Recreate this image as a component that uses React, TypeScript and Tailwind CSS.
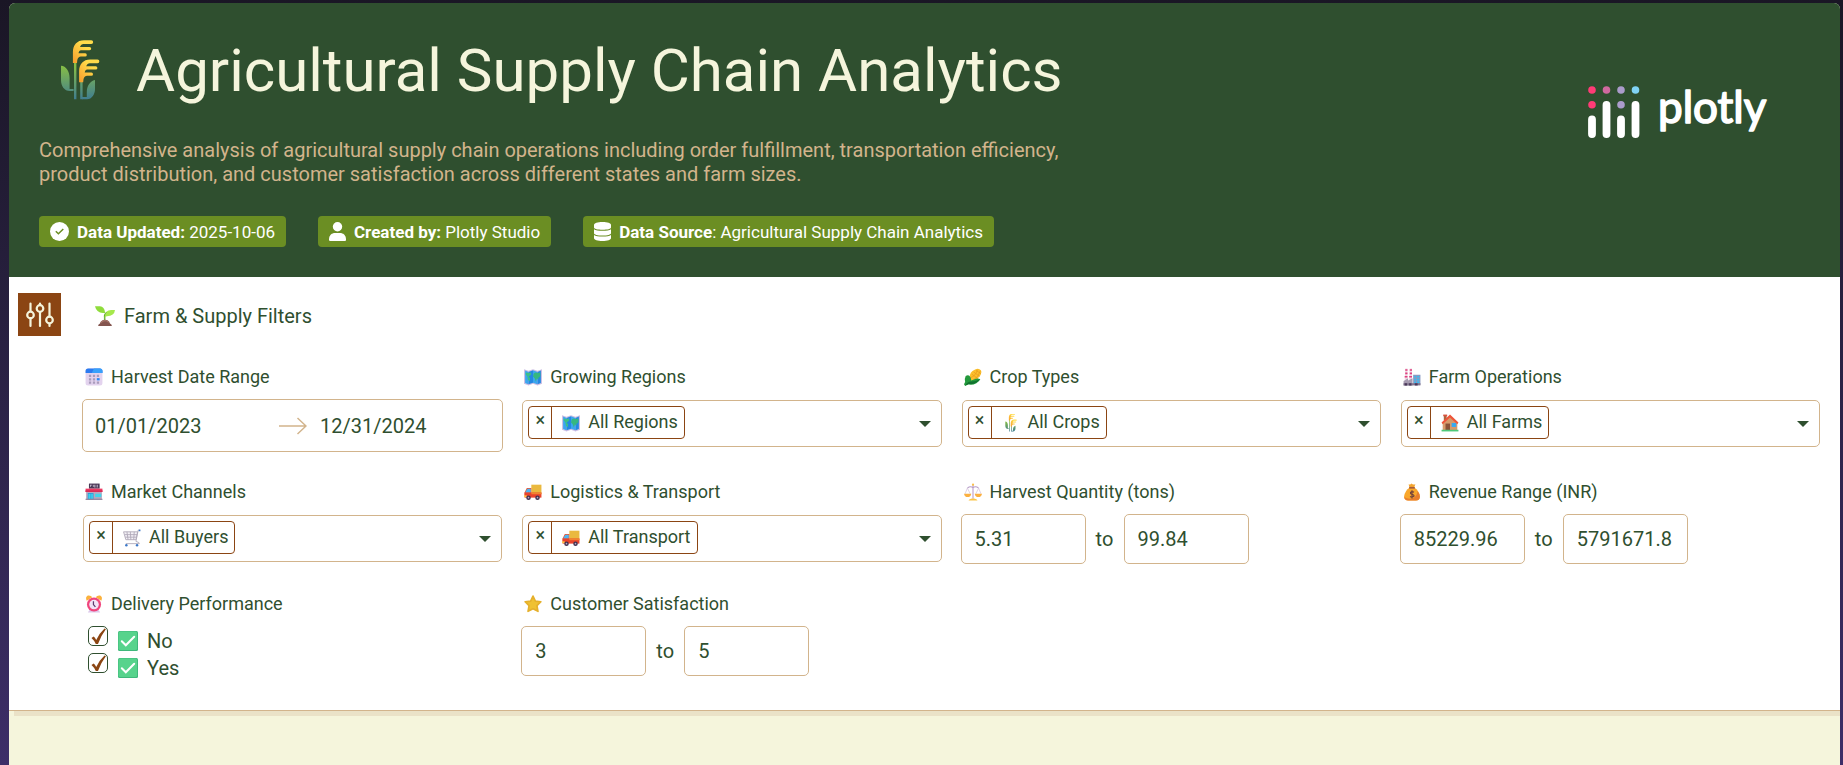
import type { ReactNode } from "react"

type IconProps = {
  className?: string
}

function Wheat({ className }: IconProps) {
  return (
    <svg viewBox="0 0 60 60" className={className} aria-hidden="true">
      <defs>
        <linearGradient id="leaf" x1="0" y1="25" x2="0" y2="60" gradientUnits="userSpaceOnUse">
          <stop offset="0" stopColor="#86bd45" />
          <stop offset="1" stopColor="#3c7a94" />
        </linearGradient>
        <linearGradient id="grain" x1="1" y1="0" x2="0" y2="1">
          <stop offset="0.35" stopColor="#ffdc4a" />
          <stop offset="1" stopColor="#f79a2c" />
        </linearGradient>
      </defs>
      <path d="M24 19h2.4v39.3H24zM30.2 39h2.4v19.3h-2.4z" fill="url(#leaf)" />
      <path d="M11 24.7C16 25 19.6 30 19.6 37v11h4v2H20C14 50 11 45 11 39z" fill="url(#leaf)" />
      <path d="M45 39C40 40 36.8 45 36.8 51v5H32v2.3h5C42 58.3 45 53 45 48z" fill="url(#leaf)" />
      <path
        id="ear"
        d="M22.9 22V11C22.9 4 27 -.8 34 -.8h7.3a1.85 1.85 0 0 1 0 3.7H33.5q-2.5 0-3.5 3H39.5a1.7 1.7 0 0 1 0 3.4H31q-2 0-2.5 3H35.2a1.6 1.6 0 0 1 0 3.2H31q-3 0-3.7 3.5L27 22z"
        fill="url(#grain)"
      />
      <use href="#ear" x="6.2" y="19.3" />
    </svg>
  )
}

function Seedling({ className }: IconProps) {
  return (
    <svg viewBox="0 0 32 32" className={className} aria-hidden="true">
      <path d="M15.5 14v10" stroke="#6fb83c" strokeWidth="2.5" />
      <path d="M0 .5h8q7 1 8 9.500v1Q3 13 0 .5z" fill="#8fdc3c" />
      <path d="M32 6.500q-1 9.500-13 10l-4 1q1-11 11-11z" fill="#a6e84c" />
      <path d="M15 17q0-5 3-7" stroke="#5fa52f" strokeWidth="1.5" fill="none" />
      <path d="M5 32q0-3 3-4 2-6 8-6t8 6q3 1 3 4z" fill="#84554f" />
      <path d="M9 27q3-3.500 7-3.500t6 2.500" stroke="#a8776c" strokeWidth="2" fill="none" />
    </svg>
  )
}

function CalendarIcon({ className }: IconProps) {
  return (
    <svg viewBox="0 0 32 32" className={className} aria-hidden="true">
      <rect x="1" y="1" width="30" height="30" rx="4.5" fill="#e3d3ee" />
      <path d="M1 9V5.500A4.500 4.500 0 0 1 5.500 1h21A4.500 4.500 0 0 1 31 5.500V9z" fill="#2b7bf0" />
      <path d="M16 1h10.500A4.500 4.500 0 0 1 31 5.500V9H12z" fill="#38a0fb" />
      <path
        d="M7 12h4v4H7zM14 12h4v4h-4zM21 12h4v4h-4zM7 18h4v4H7zM14 18h4v4h-4zM7 24h4v4H7zM14 24h4v4h-4zM21 24h4v4h-4z"
        fill="#a99cbc"
      />
      <path d="M21 18h5v4h-5z" fill="#2b86f5" />
    </svg>
  )
}

function MapIcon({ className }: IconProps) {
  return (
    <svg viewBox="0 0 32 32" className={className} aria-hidden="true">
      <path d="M0 2l8 3 8-3 8 3 8-3v26l-8 3-8-3-8 3-8-3z" fill="#cdbfe3" />
      <path d="M2 4.500l6 2.500v22l-6-2.500z" fill="#3ba6ef" />
      <path d="M8 7l8-3v22l-8 3z" fill="#2488e2" />
      <path d="M16 4l8 3v22l-8-3z" fill="#3ba6ef" />
      <path d="M24 7l6-2.500v22L24 29z" fill="#2488e2" />
      <path d="M3 8l4 1 5-1 1 3-3 3-2 1 3 3-1 6-3-3-1-6-3-4z" fill="#3cbf8a" />
      <path d="M17 10l3-2 5 1 4-1v7l-3 2-1 4-2-3-2 6-2-6-3-3z" fill="#35b780" />
    </svg>
  )
}

function Corn({ className }: IconProps) {
  return (
    <svg viewBox="0 0 32 32" className={className} aria-hidden="true">
      <path d="M10 20Q9 7 19 3q7-4 11 1 3 6-4 13-6 6-11 7z" fill="#fbc02d" />
      <path
        d="M14 11l11 8M17 7l11 8M21 4l9 6M12 17q9-3 12-14M17 21q9-5 12-16"
        stroke="#e79a1d"
        strokeWidth="1.2"
        fill="none"
      />
      <path d="M3 14q8-4 10 8l8-3q5-1 8 1-2 4-7 7-8 4-14 2l-6 3-2-3 2-4q-2-5 1-11z" fill="#23993c" />
      <path d="M2 31q5-8 12-7 7 0 14-4-5 9-20 9z" fill="#11722f" />
    </svg>
  )
}

function Factory({ className }: IconProps) {
  return (
    <svg viewBox="0 0 32 32" className={className} aria-hidden="true">
      <path d="M4 1h4v20H3zM12 1h4v20h-5z" fill="#efd7e4" />
      <path d="M4 2h4v3H4zM4 8h4v3H4zM3 14h5v3H3zM12 2h4v3h-4zM12 8h4v3h-4zM11 14h5v3h-5z" fill="#e0407f" />
      <path d="M18 12h13v18H18z" fill="#8b9ac0" />
      <path d="M20 14h3v3h-3zM25 14h4v3h-4zM20 19h3v3h-3zM25 19h4v3h-4zM20 24h3v3h-3zM25 24h4v3h-4z" fill="#35bdf3" />
      <path d="M1 23l8-5v4l8-4v13H1z" fill="#a69bb0" />
      <path d="M1 27h30v4H1z" fill="#83778f" />
      <path d="M3 27h4v4H3zM11 27h4v4h-4zM21 27h5v4h-5z" fill="#493659" />
    </svg>
  )
}

function House({ className }: IconProps) {
  return (
    <svg viewBox="0 0 32 32" className={className} aria-hidden="true">
      <path d="M5 2h5v9H5z" fill="#a9643f" />
      <path d="M4 1h7v3H4z" fill="#d9523c" />
      <path d="M16 4L3 17v12h26V17z" fill="#d69b6c" />
      <path d="M16 1L1 15l2 3L16 6l13 12 2-3z" fill="#ee5439" />
      <path d="M8 17h8v12H8z" fill="#8a5238" />
      <path d="M19 16h8v7h-8z" fill="#37aaf2" />
      <path d="M1 28h30v3H1z" fill="#4fc878" />
    </svg>
  )
}

function Store({ className }: IconProps) {
  return (
    <svg viewBox="0 0 32 32" className={className} aria-hidden="true">
      <path d="M7 1h19v9H7z" fill="#4b3857" />
      <path d="M9 3h3v1.500h-2V7H9zM14 3h1v2h1V3h1v5h-1V6h-2zM19 3h1v5h-1zM22 3h1v5h-1z" fill="#e7ddeb" />
      <path d="M2 15h28v14H2z" fill="#b5a8bf" />
      <path d="M1 10h30v6H1z" fill="#ed3a63" />
      <path d="M1 13h30v3H1z" fill="#d92b56" />
      <path d="M5 18h10v11H5z" fill="#1690d8" />
      <path d="M6 19h4v10H6zM11 19h3v10h-3z" fill="#3fd0ee" />
      <path d="M18 19h11v6H18z" fill="#43d3ea" />
      <path d="M1 28h30v2H1z" fill="#8b7d98" />
    </svg>
  )
}

function Truck({ className }: IconProps) {
  return (
    <svg viewBox="0 0 32 32" className={className} aria-hidden="true">
      <path d="M13 3h18v16H13z" fill="#eab93f" />
      <path d="M5 9h8v13H1v-5z" fill="#f0542f" />
      <path d="M6 10h6v7H2z" fill="#4db5f3" />
      <path d="M1 17h30v9H1z" fill="#e9432c" />
      <path d="M13 17h18v3H13z" fill="#f3822f" />
      <path d="M0 22h5v3H0z" fill="#ffc54b" />
      <circle cx="8" cy="26" r="4" fill="#40304f" />
      <circle cx="24" cy="26" r="4" fill="#40304f" />
      <circle cx="8" cy="26" r="1.5" fill="#b9abc8" />
      <circle cx="24" cy="26" r="1.5" fill="#b9abc8" />
    </svg>
  )
}

function Cart({ className }: IconProps) {
  return (
    <svg viewBox="0 0 32 32" className={className} aria-hidden="true">
      <g fill="none" stroke="#b0a9b9" strokeWidth="1.6" strokeLinejoin="round">
        <path d="M1 5h25l-3 14H5z" fill="#f3f0f6" />
        <path d="M3 10h22M4 14.500h20M7 5l2 14M13 5l1 14M20 5l-1 14" />
        <path d="M30 2h-3l-4 20q7 2 6 4H5" />
      </g>
      <path d="M28 1h3v3h-3z" fill="#3c78c8" />
      <circle cx="6" cy="29" r="2.2" fill="#3c78c8" />
      <circle cx="25" cy="29" r="2.2" fill="#3c78c8" />
    </svg>
  )
}

function Scales({ className }: IconProps) {
  return (
    <svg viewBox="0 0 32 32" className={className} aria-hidden="true">
      <path d="M16 3v25" stroke="#c4a9d0" strokeWidth="2.2" />
      <path d="M6 9q5-4 10-1 5-3 10 1" stroke="#b59bc6" strokeWidth="1.8" fill="none" />
      <path d="M6 9L2 19M6 9l5 10M26 9l-5 10M26 9l4 10" stroke="#cfbcd8" strokeWidth="1.2" />
      <circle cx="16" cy="3" r="2" fill="#fbc14a" />
      <path d="M0 19h13q-1 6-6.500 6T0 19zM19 19h13q-1 6-6.500 6T19 19z" fill="#fbb040" />
      <path d="M8 31q1-3 6-3.500h4q5 .5 6 3.500z" fill="#fcc548" />
    </svg>
  )
}

function MoneyBag({ className }: IconProps) {
  return (
    <svg viewBox="0 0 32 32" className={className} aria-hidden="true">
      <path d="M10 2q3 2 5-1 3 3 7 1l-3 8h-7z" fill="#f3a530" />
      <path d="M12 8h8q9 6 10 16 0 7-7 7H9q-7 0-7-7Q3 14 12 8z" fill="#f9a72c" />
      <path d="M26 14q4 5 4 10 0 7-7 7H9q-6 0-7-6 9 5 17 1 6-4 7-12z" fill="#e97f2e" />
      <path d="M11 7h10v3H11z" fill="#a35a3d" />
      <path
        d="M19.5 16.5q-3.500-2.500-6 0-1 3 2.500 3.500 4 1 3.500 3.500-3 3-7 .5M16 13v14.500"
        stroke="#70413a"
        strokeWidth="2"
        fill="none"
      />
    </svg>
  )
}

function AlarmClock({ className }: IconProps) {
  return (
    <svg viewBox="0 0 32 32" className={className} aria-hidden="true">
      <path d="M5 31l4-6h14l4 6z" fill="#dcc9ea" />
      <path d="M3 10Q0 4 5 1q5-1 8 3zM29 10q3-6-2-9-5-1-8 3z" fill="#fbb13c" />
      <circle cx="16" cy="17" r="12.5" fill="#f0457c" />
      <circle cx="16" cy="17" r="8.5" fill="#f2e4f6" />
      <path d="M15 11v6l3.500 4" stroke="#5c3b6c" strokeWidth="2.2" fill="none" />
    </svg>
  )
}

function Star({ className }: IconProps) {
  return (
    <svg viewBox="0 0 32 32" className={className} aria-hidden="true">
      <path
        d="M16 2l4.200 8.800 9.800 1.200-7 7 1.800 10L16 24.500 7.200 29 9 19l-7-7 9.800-1.200z"
        fill="#efc132"
        stroke="#e5b02c"
        strokeWidth="3"
        strokeLinejoin="round"
      />
    </svg>
  )
}

function GreenCheck({ className }: IconProps) {
  return (
    <svg viewBox="0 0 20 20" className={className} aria-hidden="true">
      <rect width="20" height="20" rx="1.5" fill="#3fb87b" />
      <rect x="0.5" y="0.5" width="18.5" height="18.5" rx="1.5" fill="#57d38c" />
      <path d="M3.800 10.300l4 4 8.400-8.600" stroke="#fff" strokeWidth="2" fill="none" strokeLinecap="round" />
    </svg>
  )
}

function CircleCheck() {
  return (
    <svg viewBox="0 0 19 19" className="size-[19px]" aria-hidden="true">
      <circle cx="9.5" cy="9.5" r="9.5" fill="#fff" />
      <path d="M5.800 9.200l2.600 2.500 4.900-4.700" stroke="#6b8e23" strokeWidth="1.5" fill="none" />
    </svg>
  )
}

function Person() {
  return (
    <svg viewBox="0 0 17 19" className="h-[19px] w-[17px]" fill="#fff" aria-hidden="true">
      <circle cx="8.5" cy="4.7" r="4.7" />
      <path d="M0 17.500C0 13 3 11 6 11h5c3 0 6 2 6 6.500 0 1-.5 1.500-1.500 1.500h-14C.5 19 0 18.500 0 17.500z" />
    </svg>
  )
}

function Database() {
  return (
    <svg viewBox="0 0 17 19" className="h-[19px] w-[17px]" fill="#fff" aria-hidden="true">
      <path d="M0 3C0 1.200 3.500 0 8.500 0S17 1.200 17 3v2.500c0 1.300-3.500 2.300-8.500 2.300S0 6.800 0 5.500z" />
      <path d="M0 7.200c1.500 1 4.500 1.600 8.500 1.600S15.500 8.200 17 7.200v4c0 1.300-3.500 2.400-8.500 2.400S0 12.500 0 11.200z" />
      <path d="M0 13c1.500 1 4.500 1.600 8.500 1.600S15.500 14 17 13v3c0 1.800-3.500 3-8.500 3S0 17.800 0 16z" />
    </svg>
  )
}

function Sliders() {
  return (
    <svg
      viewBox="0 0 28 26"
      className="h-[26px] w-7"
      fill="none"
      stroke="#f5f5dc"
      strokeWidth="2.2"
      strokeLinecap="round"
      aria-hidden="true"
    >
      <path d="M4.500 1.500v7.500M4.500 16v8M14 1.500v1M14 10.500v13.500M23.500 1.500v13M23.500 22v2" />
      <circle cx="4.5" cy="13" r="3.3" />
      <circle cx="14" cy="6.5" r="3.3" />
      <circle cx="23.5" cy="18" r="3.3" />
    </svg>
  )
}

function PlotlyLogo() {
  return (
    <svg viewBox="0 -12 184 72" className="h-[72px] w-[184px]" role="img" aria-label="plotly">
      <circle cx="4" cy="4" r="3.8" fill="#ff3b76" />
      <circle cx="18.5" cy="4" r="3.8" fill="#d0699f" />
      <circle cx="33" cy="4" r="3.8" fill="#ab9ccb" />
      <circle cx="47.5" cy="4" r="3.8" fill="#80d3f5" />
      <circle cx="4" cy="18.7" r="3.8" fill="#ff3b76" />
      <circle cx="33" cy="18.7" r="3.8" fill="#ab9ccb" />
      <path
        d="M4 33.500V48M18.500 19V48M33 33.500V48M47.500 19V48"
        stroke="#fff"
        strokeWidth="7.8"
        strokeLinecap="round"
      />
      <text
        x="70"
        y="37"
        fill="#fff"
        stroke="#fff"
        strokeWidth="1.6"
        strokeLinejoin="round"
        className="font-['Lato',sans-serif] text-[44px]"
      >
        plotly
      </text>
    </svg>
  )
}

type BadgeProps = {
  icon: ReactNode
  children: ReactNode
}

function Badge({ icon, children }: BadgeProps) {
  return (
    <span className="flex h-[31px] items-center gap-2 rounded bg-[#6b8e23] px-[11px] text-[17px] leading-6 text-white">
      {icon}
      <span>{children}</span>
    </span>
  )
}

type FieldProps = {
  id: string
  icon: ReactNode
  title: string
  children: ReactNode
}

function Field({ id, icon, title, children }: FieldProps) {
  return (
    <div className="flex flex-col gap-2.5">
      <label htmlFor={id} className="flex items-center gap-2 pl-[3px] text-lg leading-6">
        {icon}
        {title}
      </label>
      {children}
    </div>
  )
}

type TagSelectProps = {
  id: string
  icon: ReactNode
  value: string
}

function TagSelect({ id, icon, value }: TagSelectProps) {
  return (
    <div className="relative m-px flex h-[47px] items-start rounded-[5px] border border-[#d2b48c] p-[5px]">
      <div className="flex h-[33px] rounded-sm border border-[#8b4513] text-lg leading-[29px]">
        <button
          type="button"
          aria-label={"Remove " + value}
          className="flex w-[23px] justify-center border-r border-[#8b4513] leading-[26px]"
        >
          ×
        </button>
        <span className="flex gap-2 pr-1.5 pl-2.5">
          <span className="flex items-center">{icon}</span>
          {value}
        </span>
      </div>
      <select id={id} className="h-full min-w-0 flex-1 appearance-none outline-none">
        <option value=""></option>
      </select>
      <svg viewBox="0 0 12 6" className="pointer-events-none absolute top-5 right-2.5 h-1.5 w-3" aria-hidden="true">
        <path d="M0 0h12L6 6z" fill="#2f4f2f" />
      </svg>
    </div>
  )
}

type RangeProps = {
  id: string
  title: string
  min: string
  max: string
}

function Range({ id, title, min, max }: RangeProps) {
  const box = "h-[50px] w-[125px] rounded-[5px] border border-[#d2b48c] px-[13px] text-xl outline-none"
  return (
    <div className="flex items-center text-xl">
      <input id={id} className={box} inputMode="decimal" defaultValue={min} />
      <span className="w-[38px] text-center">to</span>
      <input aria-label={title + " maximum"} className={box} inputMode="decimal" defaultValue={max} />
    </div>
  )
}

function CheckRow({ text }: { text: string }) {
  return (
    <label className="flex h-[27px] text-xl leading-[30px]">
      <span className="relative size-5">
        <input
          type="checkbox"
          defaultChecked
          className="peer block size-5 appearance-none rounded-[5px] border border-[#2f4f2f]"
        />
        <svg
          viewBox="0 0 20 20"
          className="pointer-events-none absolute inset-0 hidden size-5 peer-checked:block"
          aria-hidden="true"
        >
          <path d="M3.500 12l2.200-1.500q1.500 1 2.500 3.500Q11.500 7 16.500 2.500l1.500.5Q13 9.500 10 18H7.800Q6.300 14.500 3.500 12z" fill="#8b4513" />
        </svg>
      </span>
      <GreenCheck className="mt-[5px] mr-[9px] ml-2.5 size-5" />
      {text}
    </label>
  )
}

const small = "size-[18px] shrink-0"

function App() {
  return (
    <div className="min-h-screen bg-linear-to-b from-[#1a1625] to-[#3d2e68] pt-[3px] pr-[3px] pl-[9px] font-['Roboto',sans-serif] text-[#2f4f2f]">
      <div className="flex min-h-[calc(100vh-3px)] flex-col overflow-hidden rounded-t-md bg-[#f5f5dc]">
        <header className="flex items-start justify-between bg-[#2f4f2f] pt-8 pr-[68px] pb-[30px] pl-[30px]">
          <div>
            <h1 className="flex items-center gap-[26px] pl-[11px] text-6xl leading-[72px] text-[#f5f5dc]">
              <Wheat className="size-[60px] overflow-visible" />
              Agricultural Supply Chain Analytics
            </h1>
            <p className="mt-[31px] max-w-5xl text-xl leading-6 text-[#d2b48c]">
              Comprehensive analysis of agricultural supply chain operations including order fulfillment, transportation
              efficiency, product distribution, and customer satisfaction across different states and farm sizes.
            </p>
            <div className="mt-[30px] flex flex-wrap gap-8">
              <Badge icon={<CircleCheck />}>
                <strong>Data Updated:</strong> 2025-10-06
              </Badge>
              <Badge icon={<Person />}>
                <strong>Created by:</strong> Plotly Studio
              </Badge>
              <Badge icon={<Database />}>
                <strong>Data Source</strong>: Agricultural Supply Chain Analytics
              </Badge>
            </div>
          </div>
          <div className="pt-[39px]">
            <PlotlyLogo />
          </div>
        </header>

        <section className="flex items-start gap-[21px] border-b border-[#d2b48c] bg-white pt-4 pr-[19px] pb-[30px] pl-[9px] shadow-[5px_5px_0_#eae2c8]">
          <button
            type="button"
            aria-label="Toggle filters"
            className="flex size-[43px] shrink-0 items-center justify-center bg-[#8b4513]"
          >
            <Sliders />
          </button>
          <div className="flex-1">
            <h2 className="mb-[26px] flex h-[46px] items-center gap-[9px] pl-[13px] text-xl">
              <Seedling className="size-5" />
              Farm &amp; Supply Filters
            </h2>
            <div className="grid grid-cols-4 gap-x-[18px] gap-y-7">
              <Field id="dates" icon={<CalendarIcon className={small} />} title="Harvest Date Range">
                <div className="flex h-[53px] items-center rounded-[5px] border border-[#d2b48c] pl-3 text-xl">
                  <input id="dates" className="w-[184px] outline-none" defaultValue="01/01/2023" />
                  <svg
                    viewBox="0 0 28 18"
                    className="h-[18px] w-7"
                    fill="none"
                    stroke="#d2b48c"
                    strokeWidth="1.5"
                    aria-hidden="true"
                  >
                    <path d="M0 9h27M18.500 1L27 9l-8.500 8" />
                  </svg>
                  <input
                    aria-label="Harvest end date"
                    className="ml-[13px] w-[150px] outline-none"
                    defaultValue="12/31/2024"
                  />
                </div>
              </Field>
              <Field id="regions" icon={<MapIcon className={small} />} title="Growing Regions">
                <TagSelect id="regions" icon={<MapIcon className={small} />} value="All Regions" />
              </Field>
              <Field id="crops" icon={<Corn className={small} />} title="Crop Types">
                <TagSelect id="crops" icon={<Wheat className={small} />} value="All Crops" />
              </Field>
              <Field id="farms" icon={<Factory className={small} />} title="Farm Operations">
                <TagSelect id="farms" icon={<House className={small} />} value="All Farms" />
              </Field>
              <Field id="buyers" icon={<Store className={small} />} title="Market Channels">
                <TagSelect id="buyers" icon={<Cart className={small} />} value="All Buyers" />
              </Field>
              <Field id="transport" icon={<Truck className={small} />} title="Logistics & Transport">
                <TagSelect id="transport" icon={<Truck className={small} />} value="All Transport" />
              </Field>
              <Field id="quantity" icon={<Scales className={small} />} title="Harvest Quantity (tons)">
                <Range id="quantity" title="Harvest quantity" min="5.31" max="99.84" />
              </Field>
              <Field id="revenue" icon={<MoneyBag className={small} />} title="Revenue Range (INR)">
                <Range id="revenue" title="Revenue" min="85229.96" max="5791671.8" />
              </Field>
              <fieldset>
                <legend className="mb-2.5 flex items-center gap-2 pl-[3px] text-lg leading-6">
                  <AlarmClock className={small} />
                  Delivery Performance
                </legend>
                <div className="pl-1.5">
                  <CheckRow text="No" />
                  <CheckRow text="Yes" />
                </div>
              </fieldset>
              <Field id="rating" icon={<Star className={small} />} title="Customer Satisfaction">
                <Range id="rating" title="Customer satisfaction" min="3" max="5" />
              </Field>
            </div>
          </div>
        </section>
      </div>
    </div>
  )
}

export default App
